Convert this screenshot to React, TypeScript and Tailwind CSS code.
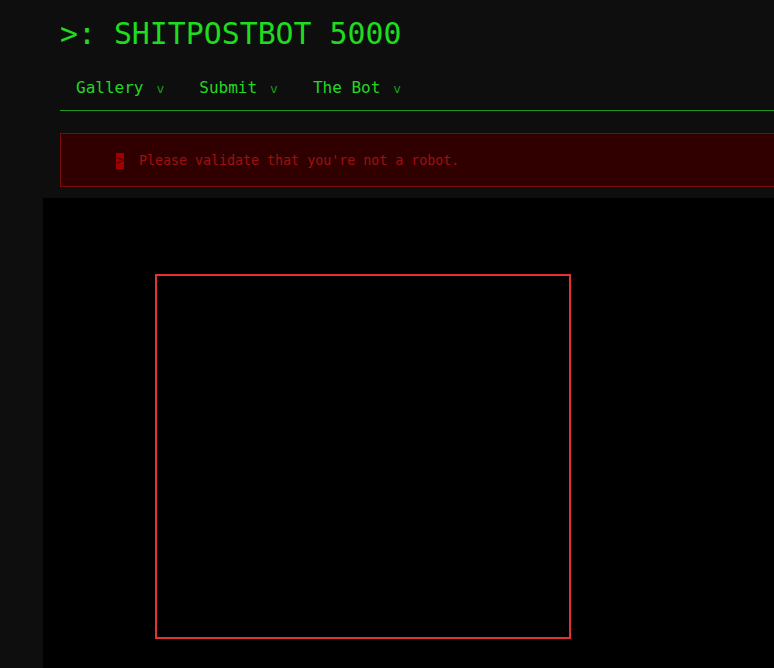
import React from "react";

const navItems = ["Gallery", "Submit", "The Bot"];

export default function App() {
  return (
    <div
      className="h-[668px] w-[774px] overflow-hidden bg-[#0e0e0e]"
      style={{ fontFamily: '"DejaVu Sans Mono", "Liberation Mono", monospace' }}
    >
      <div className="w-[840px] pl-[60px]">
        {/* Header */}
        <h1 className="pt-4 text-[29.85px] leading-[36px] text-[#1edc1e]">&gt;: SHITPOSTBOT 5000</h1>
        <nav className="mt-6 flex pb-[9px]">
          {navItems.map(item => (
            <div key={item} className="flex items-baseline pl-4 pr-[19px] leading-6">
              <span className="text-[16px] text-[#22d822]">{item}</span>
              <span className="ml-[13px] text-[13px] text-[#1c9c1c]">v</span>
            </div>
          ))}
        </nav>
        <div className="h-px bg-[#1f9a1f]" />

        {/* Alert */}
        <div className="mt-[22px] flex h-[54px] items-center border border-[#7c0b0b] bg-[#300000] pl-[55px] pt-px text-[13.3px] leading-4 text-[#a30f0f]">
          <span className="bg-[#a00000] text-[#4a0000]">&gt;</span>
          <span className="ml-[15px]">Please validate that you're not a robot.</span>
        </div>
      </div>

      {/* Captcha frame */}
      <div className="ml-[43px] mt-[11px] h-[480px] bg-black pl-[112px] pt-[76px]">
        <div className="h-[365px] w-[416px] border-2 border-[#e33232]" />
      </div>
    </div>
  );
}
